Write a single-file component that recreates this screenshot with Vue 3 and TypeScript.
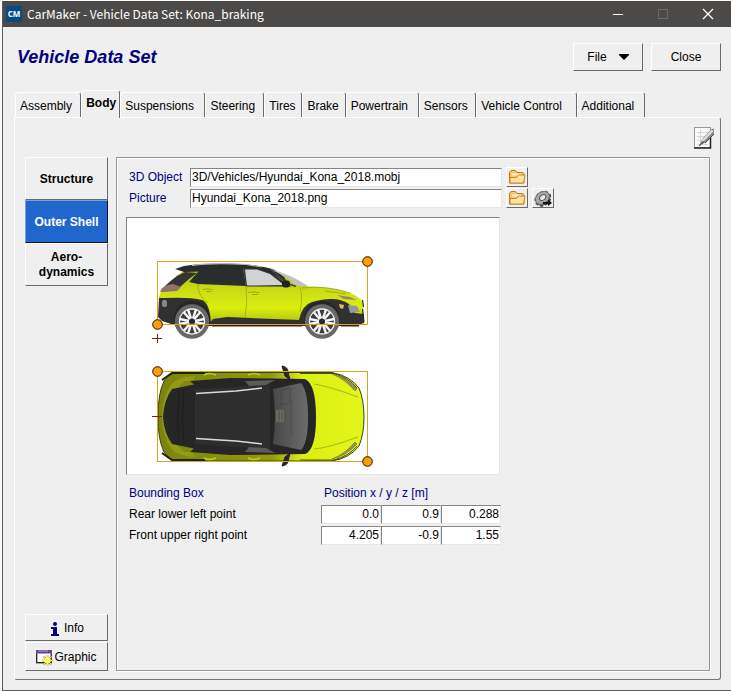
<script setup lang="ts">
import { ref } from 'vue'

const tabs: string[] = [
  'Assembly', 'Body', 'Suspensions', 'Steering', 'Tires',
  'Brake', 'Powertrain', 'Sensors', 'Vehicle Control', 'Additional',
]
const activeTab = ref('Body')

interface Section { id: string; lines: string[] }
const sections: Section[] = [
  { id: 'structure', lines: ['Structure'] },
  { id: 'shell', lines: ['Outer Shell'] },
  { id: 'aero', lines: ['Aero-', 'dynamics'] },
]
const activeSection = ref('shell')

const object3d = ref('3D/Vehicles/Hyundai_Kona_2018.mobj')
const picture = ref('Hyundai_Kona_2018.png')

interface BoxPoint { label: string; values: string[] }
const points = ref<BoxPoint[]>([
  { label: 'Rear lower left point', values: ['0.0', '0.9', '0.288'] },
  { label: 'Front upper right point', values: ['4.205', '-0.9', '1.55'] },
])
const axes: string[] = ['x', 'y', 'z']

const wheels: number[] = [192, 322]
const spokes: number[] = [0, 60, 120, 180, 240, 300]
const handles: [number, number][] = [[157.5, 324.5], [367.5, 261.5], [157.5, 371.5], [367.5, 461.5]]
</script>

<template>
  <div class="window">
    <header class="titlebar">
      <span class="logo">CM</span>
      <span class="caption">CarMaker - Vehicle Data Set: Kona_braking</span>
      <button class="sys" type="button" aria-label="Minimize">
        <svg width="12" height="12"><path d="M1 6.500h10" stroke="#fff" /></svg>
      </button>
      <button class="sys" type="button" aria-label="Maximize" disabled>
        <svg width="12" height="12"><rect x="1.500" y="1.500" width="9" height="9" fill="none" stroke="#6d6c6a" /></svg>
      </button>
      <button class="sys" type="button" aria-label="Close window">
        <svg width="12" height="12"><path d="M1 1l10 10M11 1L1 11" stroke="#fff" stroke-width="1.300" /></svg>
      </button>
    </header>

    <div class="heading">
      <h1>Vehicle Data Set</h1>
      <button class="btn top" type="button">
        File
        <svg width="10" height="6"><path d="M0 0h10v1L5 6 0 1z" /></svg>
      </button>
      <button class="btn top" type="button">Close</button>
    </div>

    <nav class="tabs" role="tablist">
      <button
        v-for="tab in tabs" :key="tab" type="button" role="tab" class="tab"
        :class="{ active: tab === activeTab }" :aria-selected="tab === activeTab"
        :style="{ flexGrow: tab === activeTab ? 0 : tab.length }"
        @click="activeTab = tab"
      >{{ tab }}</button>
    </nav>

    <main class="panel">
      <div class="tools">
        <button class="note" type="button" aria-label="Notes">
          <svg width="20" height="22" viewBox="0 0 20 22">
            <rect x="0.500" y="0.500" width="16" height="20" fill="#fafafa" stroke="#999" />
            <path d="M3 5.500h12M3 9.500h12M3 13.500h11M3 17.500h11M6.500 2v17" stroke="#d6d6d6" />
            <path d="M0 21h16.500V9" fill="none" stroke="#222" stroke-width="1.500" />
            <path d="M5 18.500L9 11 17.500 2 20 1.500V7L11 16z" fill="#8f8f8f" />
            <path d="M8.500 14L18.500 3.500" stroke="#e2e2e2" stroke-width="2" />
            <path d="M5 19l5-4.500M11 16l9-9" stroke="#444" />
          </svg>
        </button>
      </div>

      <div class="work">
        <aside class="side">
          <button
            v-for="s in sections" :key="s.id" type="button" class="btn section"
            :class="{ active: s.id === activeSection }" @click="activeSection = s.id"
          >
            <span v-for="line in s.lines" :key="line">{{ line }}</span>
          </button>
          <div class="spacer"></div>
          <button class="btn info" type="button">
            <svg width="8" height="14" viewBox="0 0 8 14" fill="#000080">
              <circle cx="4" cy="2" r="2" /><path d="M0 5h6v7h2v2H0v-2h2V7H0z" />
            </svg>
            Info
          </button>
          <button class="btn graphic" type="button">
            <svg width="17" height="17" viewBox="0 0 17 17">
              <rect x="0.700" y="1.700" width="14.500" height="12" fill="#fff" stroke="#222" stroke-width="1.300" />
              <rect x="0" y="1" width="16" height="3.500" fill="#664491" />
              <path d="M2 2h10" stroke="#b79cd5" />
              <path d="M11.500 6v11M6 11.500h11M7.500 7.500l8 8M15.500 7.500l-8 8" stroke="#8c8500" stroke-width="1.600" />
              <path d="M11.500 6v11M6 11.500h11M7.500 7.500l8 8M15.500 7.500l-8 8" stroke="#f4ef42" />
              <circle cx="11.500" cy="11.500" r="3" fill="#fffb70" />
            </svg>
            Graphic
          </button>
        </aside>

        <section class="frame">
          <div class="files">
            <label for="object3d">3D Object</label>
            <input id="object3d" v-model="object3d" type="text" class="field">
            <button class="btn icon" type="button" aria-label="Browse 3D object">
              <svg width="18" height="16" viewBox="0 0 18 16">
                <path d="M1.500 14V3.500l1.500-2h4.500l1.500 2h5.500l1.500 1V14z" fill="#f8c671" stroke="#c07716" />
                <path d="M4 5.500h9" stroke="#fff0c9" stroke-width="2" />
                <path d="M2 14V8.500h6.500l2-2.500H17l-1.500 8z" fill="#ffe3a4" stroke="#cc851f" />
              </svg>
            </button>
            <span></span>
            <label for="picture">Picture</label>
            <input id="picture" v-model="picture" type="text" class="field">
            <button class="btn icon" type="button" aria-label="Browse picture">
              <svg width="18" height="16" viewBox="0 0 18 16">
                <path d="M1.500 14V3.500l1.500-2h4.500l1.500 2h5.500l1.500 1V14z" fill="#f8c671" stroke="#c07716" />
                <path d="M4 5.500h9" stroke="#fff0c9" stroke-width="2" />
                <path d="M2 14V8.500h6.500l2-2.500H17l-1.500 8z" fill="#ffe3a4" stroke="#cc851f" />
              </svg>
            </button>
            <button class="btn icon" type="button" aria-label="Picture options">
              <svg width="18" height="18" viewBox="0 0 18 18">
                <g transform="rotate(-35 9 9)">
                  <ellipse cx="8.500" cy="9.500" rx="8" ry="6.500" fill="#555" stroke="#444" stroke-width="1.800" stroke-dasharray="3 2" />
                  <ellipse cx="8.500" cy="8.500" rx="7.500" ry="5.800" fill="#a9a9a9" stroke="#777" />
                  <ellipse cx="9" cy="8.500" rx="3.500" ry="2.500" fill="#eee" stroke="#555" />
                </g>
                <path d="M9 13h5v-2.500l4 3.500-4 3v-2H9z" fill="#111" />
              </svg>
            </button>
          </div>

          <svg class="preview" viewBox="127 218 372 256" role="img" aria-label="Vehicle side and top view">
            <defs>
              <linearGradient id="paint" x1="0" y1="0" x2="0" y2="1">
                <stop offset="0" stop-color="#a9b713" /><stop offset="0.450" stop-color="#cddf14" />
                <stop offset="0.700" stop-color="#dbee10" /><stop offset="1" stop-color="#a7b80c" />
              </linearGradient>
              <linearGradient id="topPaint" x1="0" y1="0" x2="1" y2="0">
                <stop offset="0" stop-color="#7c830e" /><stop offset="0.550" stop-color="#8f9b0c" />
                <stop offset="0.700" stop-color="#dcef13" /><stop offset="1" stop-color="#e4f619" />
              </linearGradient>
              <linearGradient id="glass" x1="0" y1="0" x2="1" y2="0">
                <stop offset="0" stop-color="#484848" /><stop offset="1" stop-color="#6c6c6c" />
              </linearGradient>
            </defs>

            <!-- side view -->
            <path d="M159 317L159 297Q161 290 166 285L178 275 190 267Q212 264 245 266 263 267 280 274L308 286.500Q333 287 350 293 360 297 363 303L364 322 358 326H210L162 320z" fill="url(#paint)" />
            <path d="M161 291Q165 285 177 276L185 272 197 273 189 279 180 287 163 291z" fill="#343434" />
            <path d="M175 269L184 266Q200 263 230 263.500 258 264 275 270L284 277 288 284 276 276 258 269.500 245 269 200 271.500 184 272z" fill="#292a2a" />
            <path d="M192 265.500Q212 262.500 246 264.500L262 267" fill="none" stroke="#b5b7ba" stroke-width="1.200" />
            <path d="M189 282L199 271 243 268.500 246 286 198 284z" fill="#2a2d2e" />
            <path d="M243 268L258 268.500 273 274 291 286.500 246 286.500z" fill="#333" />
            <path d="M245 269.500H257L270 274 284 285 247 285.500z" fill="#d1d2d4" />
            <path d="M270 269Q290 274 308 286L298 286 284 276z" fill="#bfc1c5" />
            <path d="M270 269Q277 275 289 284L296 286.500" fill="none" stroke="#444" stroke-width="1.500" />
            <rect x="282" y="280.500" width="8" height="7" rx="3" fill="#222" />
            <path d="M160 292Q162 285 173 284L181 287 177 291 163 292z" fill="#927268" />
            <path d="M158 317L159 298 165 298Q190 297 202 300 210 303 211 324L174 325 162 321z" fill="#303030" />
            <rect x="162" y="300" width="5" height="7" rx="2" fill="#888" />
            <path d="M209 324L213 319 227 317 299 320Q302 305 312 302 336 295 349 304L355 313 364 314V323L355 326H209z" fill="#303130" />
            <path d="M212 325.500H302M341 325.500H359" stroke="#322017" stroke-width="2" />
            <path d="M246 286Q248 302 245 318M300 287Q303 297 300 312M198 284Q197 295 208 303" fill="none" stroke="#94a018" stroke-width="0.700" />
            <path d="M203 289.500Q208 288 213 290M206 291.500H211M248 292.500Q254 291 260 293M252 294.500H258" fill="none" stroke="#98a511" stroke-width="0.900" />
            <path d="M302 288Q326 285 350 293M325 291L346 294" fill="none" stroke="#94a211" stroke-width="0.800" />
            <path d="M337 295L350 297 357 300 344 299z" fill="#9c865c" />
            <path d="M348 305L357 306 360 312 350 313z" fill="#999" />
            <path d="M339 304L344 305 343 309 340 308z" fill="#e0b96c" />
            <path d="M362.500 300L363.500 307M362.500 309L364 322" stroke="#292929" stroke-width="1.200" />
            <circle v-for="x in wheels" :key="'arch' + x" :cx="x" cy="319" r="18" fill="#252525" />
            <g v-for="x in wheels" :key="x">
              <circle :cx="x" cy="321.500" r="17.200" fill="#686868" />
              <circle :cx="x" cy="321.500" r="12.500" fill="#3d3d3d" stroke="#eee" stroke-width="1.300" />
              <g :transform="`translate(${x} 321.500)`">
                <path v-for="a in spokes" :key="a" d="M-1 3L-4 12M1 3L4 12" :transform="`rotate(${a})`" stroke="#f6f6f6" stroke-width="2.400" />
              </g>
              <circle :cx="x" cy="321.500" r="2.500" fill="#292929" />
            </g>

            <!-- top view -->
            <path d="M158 417Q158 393 164 381 169 373 178 372.500H332Q350 376 359 388 364 400 364 417T359 446Q350 458 332 461H178Q169 460 164 452 158 440 158 417z" fill="url(#topPaint)" stroke="#3d3e1c" />
            <path d="M162 417Q162 400 170 386 176 377 195 376L193 381H184Q170 396 169 417T184 452H193L195 457Q176 456 170 447 162 433 162 417z" fill="#99a416" fill-opacity="0.700" />
            <path d="M162 380L172 373H205M162 453L172 460H205" fill="none" stroke="#20220f" stroke-width="2" />
            <path d="M163 417Q164 400 172 389L194 384.500 190 381 230 378 305 379Q316 384 316 417T305 454L230 455 190 452 194 448.500 172 444Q164 433 163 417z" fill="#262626" />
            <path d="M193 389L270 385V449L193 444z" fill="#2e2e2e" />
            <path d="M179 391Q176 417 179 443M184 390Q181 417 184 443M194 390V444" fill="none" stroke="#1d1d1d" />
            <path d="M245 381L275 380 266 385 249 386zM245 452L275 453 266 448 249 447z" fill="#5b5b5b" />
            <path d="M273 389L301 383Q308 391 308 417T301 450L273 444Q277 417 273 389z" fill="url(#glass)" />
            <path d="M281 391L290 388V403L281 405z" fill="none" stroke="#484848" />
            <rect x="276" y="410" width="8" height="12" fill="#6d6b60" />
            <path d="M279 411V421M282 411V421M291 400V434" stroke="#4b4b4b" />
            <path d="M196 393.500L236 391 262 388M196 438.500L236 441 262 444" fill="none" stroke="#d8d9e4" stroke-width="1.500" />
            <path d="M282 366Q288 367 288 372L290 380 285 376zM282 466Q288 465 288 461L290 453 285 457z" fill="#272927" stroke="#222" />
            <path d="M204 375Q209 372 216 375M248 375Q254 372 260 375M204 458Q209 461 216 458M248 458Q254 461 260 458" fill="none" stroke="#bfd013" stroke-width="1.500" />
            <path d="M314 384Q328 386 358 397M314 449Q328 448 358 437" fill="none" stroke="#aab514" />
            <path d="M332 374Q346 377 357 389L355 391Q345 379 332 374zM332 459Q346 456 357 444L355 442Q345 454 332 459z" fill="#8c8f67" stroke="#6e7330" stroke-width="0.600" />
            <path d="M300 373.500H334Q349 378 357 388M300 460H334Q349 456 357 446" fill="none" stroke="#4b4f1c" />

            <rect class="bbox" x="157.500" y="261.500" width="210" height="63" />
            <rect class="bbox" x="157.500" y="371.500" width="210" height="90" />
            <path d="M152 338.500h10M157.500 334v9M152 416.500h10" stroke="#772020" />
            <circle v-for="(h, i) in handles" :key="i" :cx="h[0]" :cy="h[1]" r="4.800" fill="#ff9d08" stroke="#1b1200" />
          </svg>

          <table class="bounds">
            <thead>
              <tr>
                <th scope="col" class="name">Bounding Box</th>
                <th scope="colgroup" colspan="3">Position x / y / z [m]</th>
              </tr>
            </thead>
            <tbody>
              <tr v-for="p in points" :key="p.label">
                <td class="name">{{ p.label }}</td>
                <td v-for="(axis, i) in axes" :key="axis">
                  <input v-model="p.values[i]" type="text" class="field number" :aria-label="`${p.label} ${axis}`">
                </td>
              </tr>
            </tbody>
          </table>
        </section>
      </div>
    </main>
  </div>
</template>

<style>
body {
  margin: 0;
  background: #fafafa;
}
</style>

<style scoped>
* {
  box-sizing: border-box;
}
.window {
  display: flex;
  flex-direction: column;
  min-height: calc(100vh - 1px);
  margin: 1px 0 0 2px;
  border-left: 1px solid #5b5b5b;
  border-bottom: 1px solid #5b5b5b;
  background: #efefef;
  color: #000;
  font: 12px/15px "Liberation Sans", Arial, sans-serif;
}
button,
input {
  margin: 0;
  padding: 0;
  border: 0;
  border-radius: 0;
  background: none;
  color: inherit;
  font: inherit;
}
svg {
  display: block;
  flex: none;
}
.titlebar {
  display: flex;
  align-items: center;
  height: 26px;
  padding: 0 1px 0 3px;
  background: #4b4a48;
  color: #fff;
}
.logo {
  width: 16px;
  height: 16px;
  background: #064b83;
  font: bold 8px/16px "Open Sans", sans-serif;
  text-align: center;
}
.caption {
  flex: 1;
  padding-left: 5px;
  font: 12px/16px "Noto Sans CJK KR", sans-serif;
}
.sys {
  display: flex;
  align-items: center;
  justify-content: center;
  width: 45px;
  height: 26px;
}
.heading {
  display: flex;
  align-items: center;
  gap: 8px;
  height: 65px;
  padding: 0 10px 5px 14px;
}
h1 {
  flex: 1;
  margin: 0;
  color: #000080;
  font-size: 18px;
  font-style: italic;
  line-height: 24px;
}
.btn {
  display: flex;
  align-items: center;
  justify-content: center;
  border: 1px solid;
  border-color: #fff #696969 #696969 #fff;
}
.top {
  gap: 12px;
  width: 70px;
  height: 28px;
}
.tabs {
  display: flex;
  align-items: flex-end;
  width: 100%;
  max-width: 642px;
  height: 25px;
  padding-left: 12px;
}
.tab {
  flex: 1 1 auto;
  height: 25px;
  padding: 2px 2px 0 4px;
  border: 1px solid;
  border-color: #fff #6b6b6b transparent #fff;
  border-bottom: 0;
  border-radius: 4px 3px 0 0;
  text-align: left;
  white-space: nowrap;
}
.tab.active {
  z-index: 1;
  height: 28px;
  margin-bottom: -1px;
  padding: 0 3px 2px 4px;
  background: #efefef;
  font-weight: bold;
}
.panel {
  display: flex;
  flex: 1;
  flex-direction: column;
  margin: 0 10px 10px 11px;
  padding: 0 10px 8px 10px;
  border: 1px solid;
  border-color: #fff #777 #777 #fff;
  border-radius: 0 3px 3px 3px;
}
.tools {
  display: flex;
  justify-content: flex-end;
  height: 39px;
  margin-right: -4px;
  padding-top: 9px;
}
.note {
  width: 20px;
  height: 22px;
}
.work {
  display: flex;
  flex: 1;
  gap: 8px;
}
.side {
  display: flex;
  flex-direction: column;
  width: 83px;
}
.section {
  flex-direction: column;
  height: 43px;
  padding-top: 1px;
  font-weight: bold;
}
.section.active {
  border-color: #7aa2dc #101030 #101030 #7aa2dc;
  background: #2166cc;
  color: #fff;
}
.spacer {
  flex: 1;
}
.info {
  gap: 5px;
  height: 27px;
  margin-bottom: 1px;
  padding: 2px 0 0 2px;
}
.graphic {
  gap: 1px;
  height: 29px;
  padding-top: 2px;
}
.frame {
  flex: 1;
  min-width: 0;
  padding: 9px;
  border: 1px solid #969696;
  box-shadow: 1px 1px 0 #fff, inset 1px 1px 0 #fff;
}
.files {
  display: grid;
  grid-template-columns: 60px 312px 22px 22px;
  grid-auto-rows: 20px;
  align-items: center;
  gap: 1px 4px;
}
.files label {
  padding-left: 3px;
  color: #000080;
}
.field {
  width: 100%;
  height: 19px;
  padding: 0 2px 1px 1px;
  border: 1px solid;
  border-color: #858585 #e6e6e6 #e6e6e6 #858585;
  background: #fff;
}
.icon {
  width: 22px;
  height: 20px;
}
.preview {
  width: 374px;
  height: 258px;
  margin-top: 9px;
  border: 1px solid;
  border-color: #858585 #e6e6e6 #e6e6e6 #858585;
  background: #fff;
}
.bbox {
  fill: none;
  stroke: #dda21c;
  stroke-width: 1px;
}
.bounds {
  margin-top: 8px;
  border-collapse: collapse;
  table-layout: fixed;
  width: 375px;
}
.bounds th,
.bounds td {
  height: 21px;
  padding: 0;
  text-align: left;
}
.bounds th {
  padding-left: 3px;
  color: #000080;
  font-weight: normal;
}
.bounds .name {
  width: 195px;
  padding-left: 3px;
}
.number {
  display: block;
  padding-right: 1px;
  text-align: right;
}
</style>
